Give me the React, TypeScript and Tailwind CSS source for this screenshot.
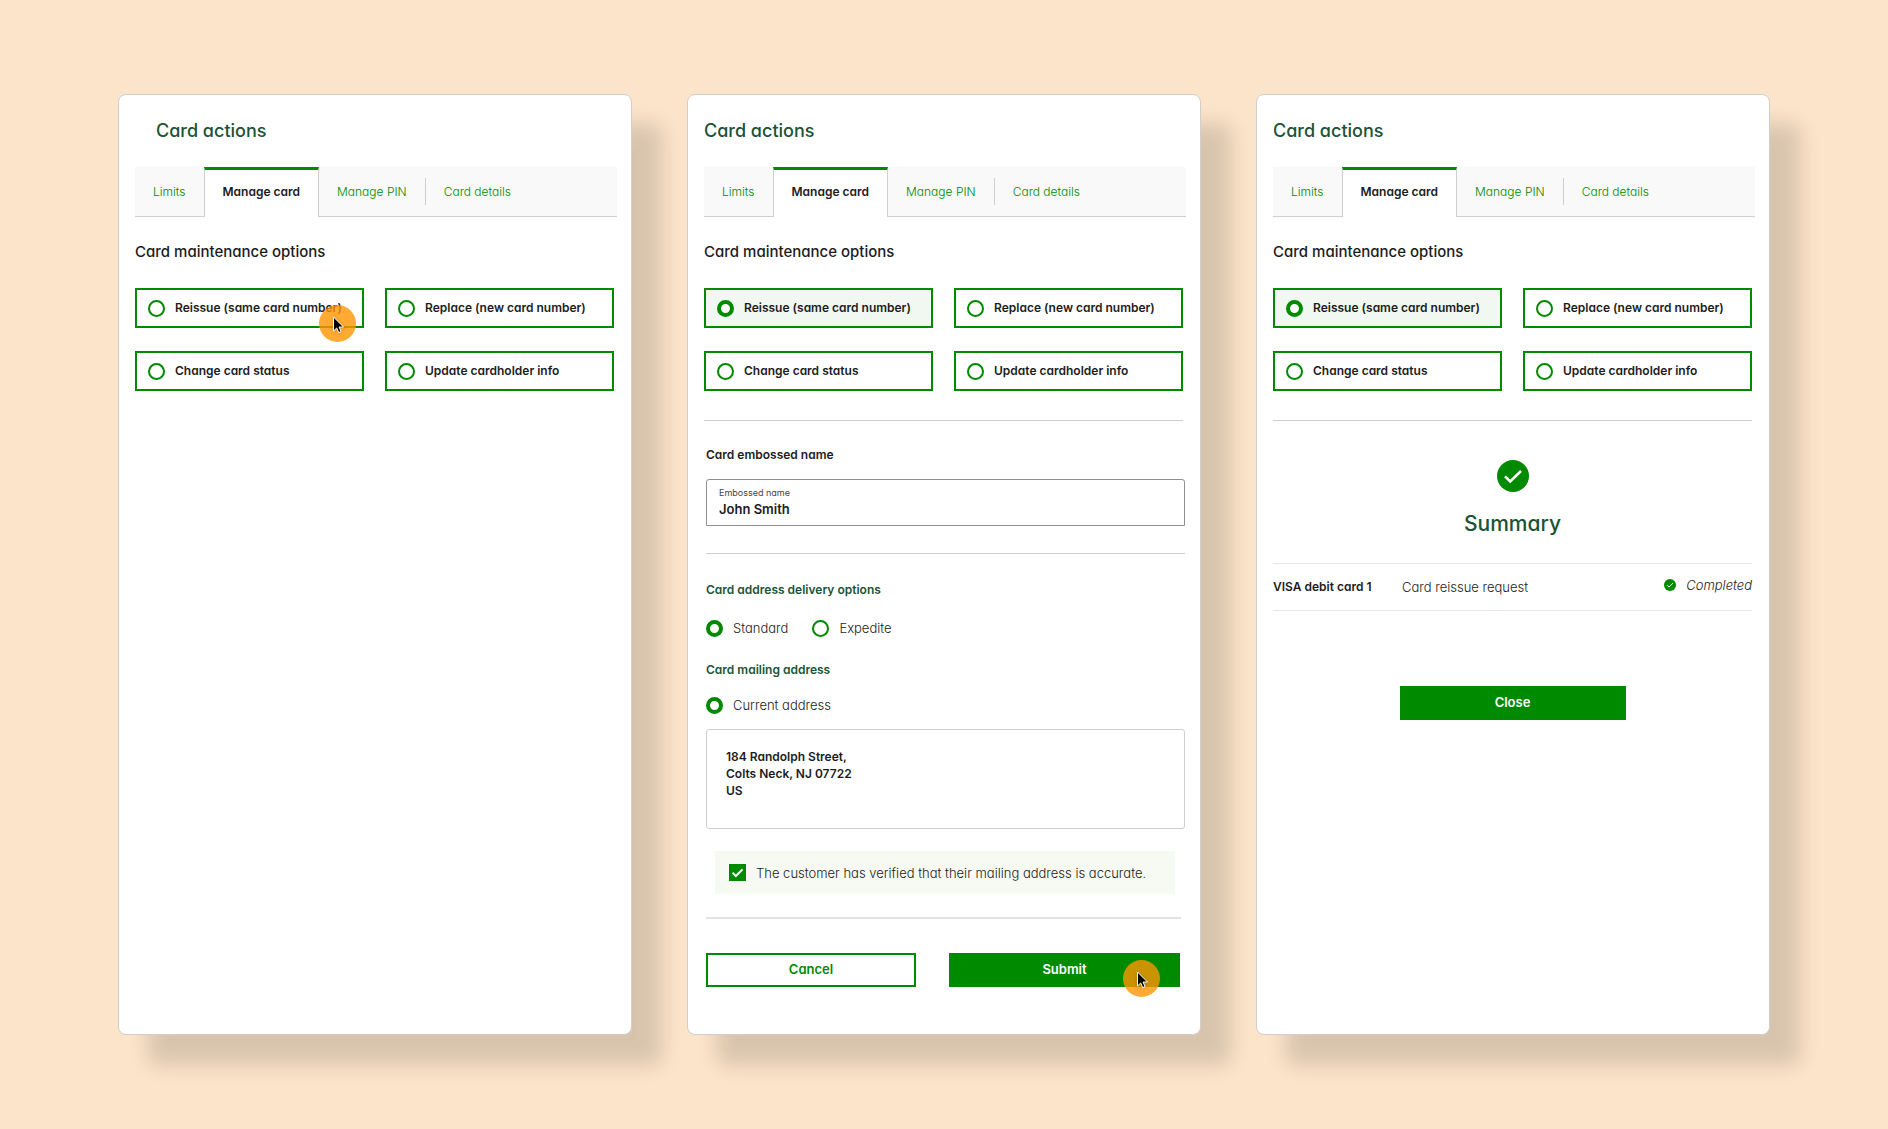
import { useId, type ReactNode } from 'react';
import { clsx } from 'clsx';

const TABS = ['Limits', 'Manage card', 'Manage PIN', 'Card details'];

const OPTIONS = [
  'Reissue (same card number)',
  'Replace (new card number)',
  'Change card status',
  'Update cardholder info',
];

const RADIO =
  'size-[17px] shrink-0 appearance-none rounded-full border-2 border-[#008a00] bg-white checked:border-4';

type PanelProps = {
  selected?: string;
  indentTitle?: boolean;
  clickOption?: string;
  children?: ReactNode;
};

/** Orange click marker with the mouse pointer in it. */
function ClickMarker({ className }: { className: string }) {
  return (
    <span
      aria-hidden="true"
      className={clsx(
        'pointer-events-none absolute z-10 size-[37px] rounded-full bg-[#ff9500]/80',
        className,
      )}
    >
      <svg viewBox="0 0 37 37" className="size-full drop-shadow-sm">
        <path
          d="M14.5 12v14l3.2-3 2 4.6 2.4-1-2-4.6h4.4z"
          fill="#000"
          stroke="#fff"
          strokeWidth="1"
          strokeLinejoin="round"
        />
      </svg>
    </span>
  );
}

function CheckCircle({ className }: { className: string }) {
  return (
    <svg viewBox="0 0 32 32" className={className} aria-hidden="true">
      <circle cx="16" cy="16" r="16" fill="#008a00" />
      <path d="M8 16.3l5.2 5.2L24 11" fill="none" stroke="#fff" strokeWidth="2.6" />
    </svg>
  );
}

function Tabs() {
  return (
    <div role="tablist" className="mt-[22px] flex h-[50px] border-b border-[#cfcfcf] bg-[#f9f9f9]">
      {TABS.map((tab) => {
        const active = tab === 'Manage card';
        return (
          <button
            key={tab}
            type="button"
            role="tab"
            aria-selected={active}
            className={clsx(
              'px-[18px] whitespace-nowrap',
              active
                ? '-mb-px border-x border-t-[3px] border-x-[#cfcfcf] border-t-[#008a00] bg-white pb-1 font-semibold'
                : 'font-light text-[#008a00]',
              tab === 'Card details' && 'my-[11px] border-l border-[#cfcfcf]',
            )}
          >
            {tab}
          </button>
        );
      })}
    </div>
  );
}

function Panel({ selected, indentTitle, clickOption, children }: PanelProps) {
  const group = useId();

  return (
    <section className="min-w-0 rounded-lg border border-[#cfcfcf] bg-white pt-[22px] pr-3.5 pb-[47px] pl-4 shadow-[30px_30px_20px_rgba(0,0,0,0.14)]">
      <h2 className={clsx('text-lg leading-7 font-medium text-[#1a5336]', indentTitle && 'pl-[21px]')}>
        Card actions
      </h2>
      <Tabs />

      <h3 id={`${group}-heading`} className="mt-[23px] text-[15px] leading-6 font-medium">
        Card maintenance options
      </h3>
      <div
        role="radiogroup"
        aria-labelledby={`${group}-heading`}
        className="mt-6 grid grid-cols-2 gap-x-[21px] gap-y-[23px] pr-[3px]"
      >
        {OPTIONS.map((option) => (
          <label
            key={option}
            className="relative flex h-10 items-center gap-2.5 border-2 border-[#008a00] pl-[11px] font-semibold whitespace-nowrap has-checked:bg-[#f1f8f2]"
          >
            <input type="radio" name={group} defaultChecked={option === selected} className={RADIO} />
            {option}
            {option === clickOption && <ClickMarker className="top-[15px] right-1.5" />}
          </label>
        ))}
      </div>

      {children}
    </section>
  );
}

function ReissueForm() {
  const id = useId();

  return (
    <form onSubmit={(e) => e.preventDefault()}>
      <hr className="mt-[29px] mr-[3px] border-[#cfcfcf]" />

      <div className="pr-px pl-0.5">
        <h4 className="mt-6 font-semibold">Card embossed name</h4>
        <div className="mt-3.5 flex h-[47px] flex-col rounded-t-[3px] border border-[#8f8f8f] px-3 pt-1.5">
          <label htmlFor={`${id}-name`} className="text-[9px] leading-[14px] text-[#444]">
            Embossed name
          </label>
          <input
            id={`${id}-name`}
            type="text"
            defaultValue="John Smith"
            className="w-full text-[13px] leading-[18px] font-semibold outline-none"
          />
        </div>
        <hr className="mt-[27px] border-[#cfcfcf]" />

        <h4 id={`${id}-delivery`} className="mt-[26px] font-semibold text-[#1a5336]">
          Card address delivery options
        </h4>
        <div
          role="radiogroup"
          aria-labelledby={`${id}-delivery`}
          className="mt-[18px] flex gap-6 text-[13px] leading-5 font-light"
        >
          <label className="flex items-center gap-2.5">
            <input type="radio" name={`${id}-delivery`} defaultChecked className={RADIO} />
            Standard
          </label>
          <label className="flex items-center gap-2.5">
            <input type="radio" name={`${id}-delivery`} className={RADIO} />
            Expedite
          </label>
        </div>

        <h4 className="mt-[22px] font-semibold text-[#1a5336]">Card mailing address</h4>
        <label className="mt-[15px] flex items-center gap-2.5 text-[13px] leading-5 font-light">
          <input type="radio" name={`${id}-mailing`} defaultChecked className={RADIO} />
          Current address
        </label>
        <address className="mt-3.5 rounded-[3px] border border-[#cfcfcf] px-[19px] pt-[18px] pb-[29px] leading-[17px] font-semibold not-italic">
          184 Randolph Street,
          <br />
          Colts Neck, NJ 07722
          <br />
          US
        </address>

        <label className="mt-[22px] mr-2.5 ml-[9px] flex h-[43px] items-center gap-2.5 bg-[#f7faf2] pl-3.5 text-[13px] font-light whitespace-nowrap">
          <span className="grid size-[17px] shrink-0">
            <input
              type="checkbox"
              defaultChecked
              className="peer col-start-1 row-start-1 size-[17px] appearance-none border-2 border-[#008a00] bg-white checked:bg-[#008a00]"
            />
            <svg
              viewBox="0 0 17 17"
              className="pointer-events-none col-start-1 row-start-1 hidden size-[17px] peer-checked:block"
              aria-hidden="true"
            >
              <path d="M3.5 8.8l3.4 3.2 6.6-6.6" fill="none" stroke="#fff" strokeWidth="2" />
            </svg>
          </span>
          The customer has verified that their mailing address is accurate.
        </label>
        <hr className="mt-[23px] mr-1 border-t-2 border-[#e4e4e4]" />

        <div className="mt-[34px] grid grid-cols-[10fr_11fr] gap-[33px] pr-[5px] text-[13px] font-semibold">
          <button type="button" className="h-[34px] border-2 border-[#008a00] pb-0.5 text-[#008a00]">
            Cancel
          </button>
          <button type="submit" className="relative h-[34px] bg-[#008a00] pb-0.5 text-white">
            Submit
            <ClickMarker className="top-[7px] right-5" />
          </button>
        </div>
      </div>
    </form>
  );
}

function Summary() {
  return (
    <div className="pr-[3px]">
      <hr className="mt-[29px] border-[#cfcfcf]" />
      <CheckCircle className="mx-auto mt-[39px] size-8" />
      <h3 className="mt-4 text-center text-[21px] leading-8 font-medium text-[#1a5336]">Summary</h3>

      <table className="mt-[23px] w-full border-y border-[#e8e8e8] text-left">
        <tbody>
          <tr className="h-[47px]">
            <th scope="row" className="w-[129px] font-semibold whitespace-nowrap">
              VISA debit card 1
            </th>
            <td className="text-[13px] font-light">Card reissue request</td>
            <td className="pb-1">
              <span className="flex items-center justify-end gap-2.5 text-[13px] font-light italic">
                <CheckCircle className="size-3" />
                Completed
              </span>
            </td>
          </tr>
        </tbody>
      </table>

      <button
        type="button"
        className="mx-auto mt-[75px] block h-[34px] w-[226px] bg-[#008a00] pb-0.5 text-[13px] font-semibold text-white"
      >
        Close
      </button>
    </div>
  );
}

export default function App() {
  return (
    <main className="grid min-h-screen grid-cols-3 gap-[55px] bg-[#fce4ca] px-[118px] py-[94px] font-['Inter',sans-serif] text-xs leading-5 text-[#1c1c1c] [font-feature-settings:'cv11']">
      <Panel indentTitle clickOption="Reissue (same card number)" />
      <Panel selected="Reissue (same card number)">
        <ReissueForm />
      </Panel>
      <Panel selected="Reissue (same card number)">
        <Summary />
      </Panel>
    </main>
  );
}
